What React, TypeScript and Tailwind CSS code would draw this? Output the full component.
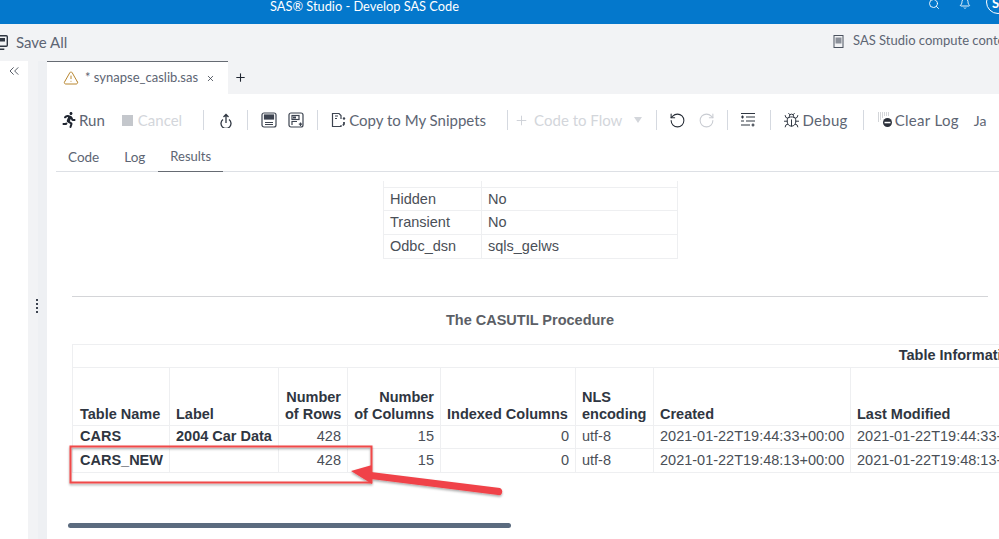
import { Bell, Bug, ChevronsLeft, Plus, RotateCcw, RotateCw, Search, TriangleAlert, X } from "lucide-react";
import { FaRunning } from "react-icons/fa";

const Sep = ({ ml }: { ml: string }) => <div className={`h-[20px] w-px bg-[#d5d9e0] shrink-0 ${ml}`} />;

const SaveIcon = ({ plus }: { plus?: boolean }) => (
  <svg width="16" height="16" viewBox="0 0 16 16" fill="none" stroke="#3d4450" strokeWidth="1.2">
    <rect x="1" y="1" width="14" height="14" rx="2" />
    {plus ? (
      <>
        <rect x="4" y="3.5" width="7" height="4" fill="none" />
        <rect x="5" y="4.5" width="3" height="2" fill="#3d4450" stroke="none" />
        <path d="M4 13v-3.5h5M12.5 10.5v3.5M10.8 12.2h3.4" />
      </>
    ) : (
      <>
        <rect x="3.5" y="3" width="9" height="4" fill="#3d4450" />
        <path d="M4 12.5h8M4 10.5h8" />
      </>
    )}
  </svg>
);

function Toolbar() {
  return (
    <div className="flex items-center h-[28px] mt-[12px] pl-[14px] text-[15px] text-[#5d6573] whitespace-nowrap">
      <FaRunning className="w-[16px] h-[16px] text-[#1f2530] shrink-0" />
      <span className="ml-[2px]">Run</span>
      <div className="ml-[17px] w-[11px] h-[11px] bg-[#c4c7cc] shrink-0" />
      <span className="ml-[5px] text-[#d3d6db]">Cancel</span>
      <Sep ml="ml-[21px]" />
      <svg className="ml-[15px] shrink-0" width="14" height="15" viewBox="0 0 14 15" fill="none" stroke="#2f3641" strokeWidth="1.3">
        <path d="M4 6.5a5 5 0 1 0 6 0M7 10V1.5M4.5 4 7 1.5 9.5 4" />
      </svg>
      <Sep ml="ml-[14px]" />
      <div className="ml-[13px] shrink-0 flex"><SaveIcon /></div>
      <div className="ml-[11px] shrink-0 flex"><SaveIcon plus /></div>
      <Sep ml="ml-[13px]" />
      <svg className="ml-[13px] shrink-0" width="15" height="16" viewBox="0 0 15 16" fill="none" stroke="#3d4450" strokeWidth="1.2">
        <path d="M10 13v1.5H1.5v-13H8l2 2V7M4 4h3M4 6.5h2" />
        <circle cx="13" cy="6.5" r="1.2" fill="#3d4450" stroke="none" />
        <path d="M13 10v2l-1 1.5" strokeWidth="1.8" />
      </svg>
      <span className="ml-[3px]">Copy to My Snippets</span>
      <Sep ml="ml-[21px]" />
      <Plus className="ml-[6px] w-[15px] h-[15px] text-[#cdd0d6] shrink-0" strokeWidth={1.5} />
      <span className="ml-[5px] text-[#d3d6db]">Code to Flow</span>
      <div className="ml-[12px] w-0 h-0 border-x-[4px] border-x-transparent border-t-[6px] border-t-[#d3d6db] shrink-0" />
      <Sep ml="ml-[14px]" />
      <RotateCcw className="ml-[12px] w-[17px] h-[17px] text-[#262c36] shrink-0" strokeWidth={1.5} />
      <RotateCw className="ml-[12px] w-[17px] h-[17px] text-[#c9ccd2] shrink-0" strokeWidth={1.5} />
      <Sep ml="ml-[12px]" />
      <svg className="ml-[12px] shrink-0" width="16" height="16" viewBox="0 0 16 16" fill="none" stroke="#2f3641" strokeWidth="1.2">
        <path d="M1 1.5h14M6 5h9M1 5h3M2.5 3.5v3M6 9h9M1 9h3M1 13h9M13 11.5v3M11.5 13h3" />
      </svg>
      <Sep ml="ml-[14px]" />
      <Bug className="ml-[12px] w-[17px] h-[17px] text-[#2f3641] shrink-0" strokeWidth={1.4} />
      <span className="ml-[2px] tracking-[0.3px]">Debug</span>
      <Sep ml="ml-[15px]" />
      <svg className="ml-[13px] shrink-0" width="16" height="16" viewBox="0 0 16 16">
        <path d="M1 1h11M1 3h11M1 5h6M1 7h4M1 9h2" stroke="#a7abb2" strokeWidth="1" strokeDasharray="1 1" />
        <circle cx="10.5" cy="10.5" r="4.5" fill="#2b303a" />
        <rect x="7.5" y="9.8" width="6" height="1.5" fill="#fff" />
      </svg>
      <span className="ml-[2px] tracking-[0.3px]">Clear Log</span>
      <span className="ml-[15px] text-[14px]">Ja</span>
    </div>
  );
}

const b = "border border-[#eeeff1]";
const c = `${b} pl-[6px] pr-[6px]`;
const th = `${c} align-bottom font-bold text-[#2f3641] pb-[2px] leading-[17px] whitespace-nowrap`;

function Results() {
  return (
    <div className="flex-1 overflow-hidden font-['Liberation_Sans',Arial,sans-serif] text-[14.5px] text-[#4a4f57]">
      <div className="pt-[9px] ml-[336px] w-[295px]">
        <table className="w-full table-fixed border-collapse">
          <colgroup>
            <col className="w-[98px]" />
            <col />
          </colgroup>
          <tbody>
            <tr className="h-[6px]">
              <td className="border-x border-[#eeeff1]" />
              <td className="border-x border-[#eeeff1]" />
            </tr>
            {[["Hidden", "No"], ["Transient", "No"], ["Odbc_dsn", "sqls_gelws"]].map(([k, v]) => (
              <tr key={k} className="h-[23.6px]">
                <td className={`${c} pt-[1px]`}>{k}</td>
                <td className={`${c} pt-[1px]`}>{v}</td>
              </tr>
            ))}
          </tbody>
        </table>
      </div>
      <div className="ml-[25px] w-[916px] mt-[37px] h-px bg-[#d4d5d8]" />
      <div className="ml-[25px] w-[916px] mt-[14px] text-center font-bold text-[#5c5f66] leading-[18px]">The CASUTIL Procedure</div>
      <table className="ml-[25px] mt-[15px] w-[1774px] table-fixed border-collapse">
        <colgroup>
          <col className="w-[97px]" />
          <col className="w-[109px]" />
          <col className="w-[69px]" />
          <col className="w-[93px]" />
          <col className="w-[135px]" />
          <col className="w-[78px]" />
          <col className="w-[197px]" />
          <col className="w-[197px]" />
          <col />
        </colgroup>
        <thead>
          <tr className="h-[23px]">
            <th colSpan={9} className={`${c} font-bold text-[#2f3641] text-center`}>Table Information</th>
          </tr>
          <tr className="h-[58px] text-left">
            <th className={`${th} pl-[7px]`}>Table Name</th>
            <th className={th}>Label</th>
            <th className={`${th} text-right`}>Number<br />of Rows</th>
            <th className={`${th} text-right`}>Number<br />of Columns</th>
            <th className={th}>Indexed Columns</th>
            <th className={th}>NLS<br />encoding</th>
            <th className={th}>Created</th>
            <th className={th}>Last Modified</th>
            <th className={th} />
          </tr>
        </thead>
        <tbody>
          {[
            ["CARS", "2004 Car Data", "2021-01-22T19:44:33+00:00"],
            ["CARS_NEW", "", "2021-01-22T19:48:13+00:00"],
          ].map(([n, l, d]) => (
            <tr key={n} className="h-[23.5px] whitespace-nowrap">
              <td className={`${c} pl-[7px] font-bold text-[#2f3641]`}>{n}</td>
              <td className={`${c} font-bold text-[#2f3641]`}>{l}</td>
              <td className={`${c} text-right`}>428</td>
              <td className={`${c} text-right`}>15</td>
              <td className={`${c} text-right`}>0</td>
              <td className={c}>utf-8</td>
              <td className={c}>{d}</td>
              <td className={c}>{d}</td>
              <td className={c} />
            </tr>
          ))}
        </tbody>
      </table>
      <div className="ml-[21px] mt-[50px] w-[443px] h-[5px] rounded-full bg-[#5b6b7f]" />
    </div>
  );
}

export default function App() {
  return (
    <div className="relative w-[999px] h-[539px] overflow-hidden bg-white flex flex-col font-['Lato','Noto_Sans',sans-serif]">
      <header className="relative h-[24px] shrink-0 bg-[#0478cc] text-white">
        <div className="absolute left-[270px] -top-[4px] text-[12.8px] leading-[20px] whitespace-nowrap">SAS® Studio - Develop SAS Code</div>
        <Search className="absolute left-[928px] -top-[2px] w-[12px] h-[12px]" strokeWidth={1.8} />
        <Bell className="absolute left-[959px] -top-[3px] w-[12px] h-[13px]" strokeWidth={1.8} />
        <div className="absolute left-[986px] -top-[10px] w-[24px] h-[24px] rounded-full border border-white text-[13px] font-bold pl-[5px] pt-[5px] leading-[14px]">S</div>
      </header>
      <div className="h-[37px] shrink-0 bg-[#f2f3f5] flex items-center justify-between text-[#5d6573] whitespace-nowrap">
        <div className="flex items-center -ml-[6px]">
          <svg width="14" height="15" viewBox="0 0 14 15" fill="none" stroke="#2f3641" strokeWidth="1.4">
            <rect x="3.7" y="0.7" width="9.6" height="10.6" rx="1" />
            <path d="M0.7 3.5v10.8h9.6" />
            <rect x="6" y="3" width="5" height="3.5" fill="#2f3641" stroke="none" />
          </svg>
          <span className="ml-[8px] text-[15px]">Save All</span>
        </div>
        <div className="flex items-center w-[166px] mb-[3px] shrink-0 overflow-hidden">
          <svg width="11" height="13" viewBox="0 0 11 13" fill="none" stroke="#4b525e" strokeWidth="1" className="shrink-0">
            <rect x="1" y="0.5" width="9" height="12" />
            <rect x="2.5" y="2.5" width="6" height="6" fill="#8b9099" stroke="none" />
          </svg>
          <span className="ml-[9px] text-[13px]">SAS Studio compute context</span>
        </div>
      </div>
      <div className="flex-1 flex min-h-0">
        <aside className="w-[28px] shrink-0 bg-white flex justify-center pt-[2px]">
          <ChevronsLeft className="w-[16px] h-[16px] text-[#3d4450]" strokeWidth={1.3} />
        </aside>
        <div className="relative w-[19px] shrink-0 bg-[#f2f3f5] flex">
          <div className="w-[10px] h-full" />
          <div className="w-[9px] h-full bg-[#eef0f3]" />
          <div className="absolute left-[8px] top-[238px] flex flex-col gap-[2px]">
            {[0, 1, 2, 3].map((i) => <div key={i} className="w-[2px] h-[2px] bg-[#3d4450]" />)}
          </div>
        </div>
        <main className="flex-1 min-w-0 flex flex-col">
          <div className="h-[33px] shrink-0 bg-[#f2f3f5] flex items-stretch">
            <div className="w-[181px] bg-white border-t border-[#666b73] flex items-center pl-[16px] whitespace-nowrap">
              <TriangleAlert className="w-[16px] h-[16px] text-[#b8862e]" strokeWidth={1.5} />
              <span className="ml-[6px] text-[13px] text-[#5d6573]">* synapse_caslib.sas</span>
              <X className="ml-[8px] w-[9px] h-[9px] text-[#2f3641]" strokeWidth={2} />
            </div>
            <div className="ml-[6px] flex items-center">
              <Plus className="w-[13px] h-[13px] text-[#1f2530]" strokeWidth={2} />
            </div>
          </div>
          <Toolbar />
          <div className="ml-[9px] mt-[7px] h-[31px] border-b border-[#dde0e5] flex text-[13.5px] text-[#5d6573] shrink-0">
            <div className="pl-[12px] pr-[12px] pt-[1px] flex items-center h-[31px]">Code</div>
            <div className="pl-[13px] pr-[13px] pt-[1px] flex items-center h-[31px]">Log</div>
            <div className="px-[12px] pt-[1px] text-[13px] flex items-center h-[31px] border-b border-[#666b73]">Results</div>
          </div>
          <Results />
        </main>
      </div>
      <svg className="absolute left-0 top-0 pointer-events-none" width="999" height="539" viewBox="0 0 999 539">
        <defs>
          <filter id="sh" x="-10%" y="-30%" width="120%" height="160%">
            <feDropShadow dx="0" dy="1.5" stdDeviation="1.2" floodColor="#000" floodOpacity="0.35" />
          </filter>
        </defs>
        <g filter="url(#sh)">
          <rect x="70.5" y="446.5" width="301" height="36" fill="none" stroke="#f04848" strokeWidth="2" />
          <path d="M351 471 L372 465 L371 472 L500 488 Q503 490 502 493 Q501 496 498 495 L371 479 L372 484 Z" fill="#f04348" />
        </g>
      </svg>
    </div>
  );
}
